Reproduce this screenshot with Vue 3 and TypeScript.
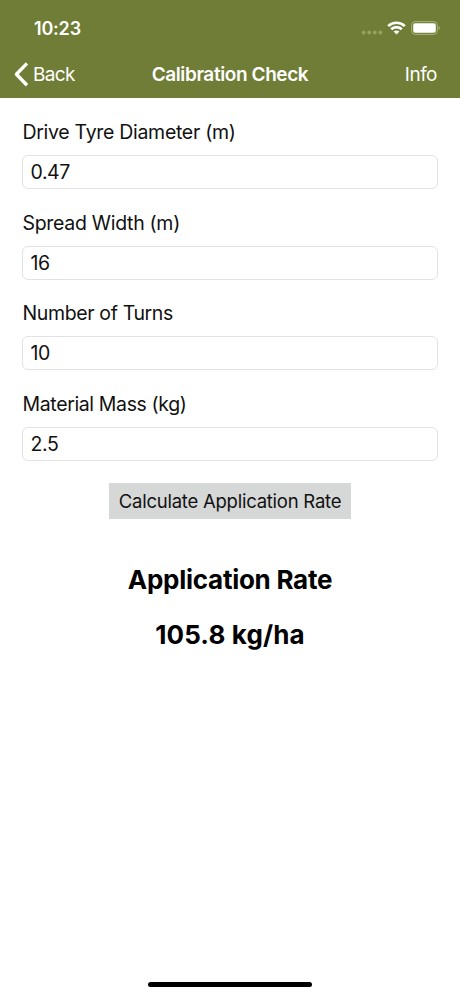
<script setup lang="ts">
import { computed, ref } from 'vue'

interface Field {
  id: string
  label: string
  value: string
}

const fields = ref<Field[]>([
  { id: 'diameter', label: 'Drive Tyre Diameter (m)', value: '0.47' },
  { id: 'width', label: 'Spread Width (m)', value: '16' },
  { id: 'turns', label: 'Number of Turns', value: '10' },
  { id: 'mass', label: 'Material Mass (kg)', value: '2.5' },
])

function calculate(): number {
  const [diameter, width, turns, mass] = fields.value.map((f) => Number(f.value))
  // mass over covered area, converted from kg/m² to kg/ha
  return (mass / (Math.PI * diameter * turns * width)) * 10000
}

const rate = ref(calculate())
const rateText = computed(() => `${rate.value.toFixed(1)} kg/ha`)
</script>

<template>
  <div class="screen">
    <header class="header">
      <div class="status">
        <span class="time">10:23</span>
        <div class="indicators">
          <svg class="dots" width="22" height="5" viewBox="0 0 22 5" fill="#97a35a">
            <circle cx="2.6" cy="2.5" r="1.9" />
            <circle cx="8.2" cy="2.5" r="1.9" />
            <circle cx="13.8" cy="2.5" r="1.9" />
            <circle cx="19.4" cy="2.5" r="1.9" />
          </svg>
          <svg class="wifi" width="19" height="14" viewBox="0 0 19 14" fill="none" stroke="#fff" stroke-width="2.7">
            <path d="M1.2 5.1 C5.8 .6 13.2 .6 17.8 5.1" />
            <path d="M4.2 8.3 C7.1 5.4 11.9 5.4 14.8 8.3" />
            <path d="M9.5 13.5 L6.6 10.6 C8.2 9.2 10.8 9.2 12.4 10.6 Z" fill="#fff" stroke="none" />
          </svg>
          <svg class="battery" width="30" height="14" viewBox="0 0 30 14">
            <rect x=".6" y=".6" width="25.8" height="12.8" rx="3.6" fill="none" stroke="#a9b477" stroke-width="1" />
            <rect x="2.2" y="2.2" width="22.6" height="9.6" rx="2" fill="#fff" />
            <path d="M27.6 4.8 C29.3 5.5 29.3 8.5 27.6 9.2 Z" fill="#a9b477" />
          </svg>
        </div>
      </div>
      <nav class="nav">
        <a class="back">
          <svg width="15" height="25" viewBox="0 0 15 25" fill="none" stroke="#fff" stroke-width="3.4" stroke-linejoin="round">
            <path d="M13 1.4 L2.4 12.3 L13 23.2" />
          </svg>
          <span class="back-text">Back</span>
        </a>
        <h1 class="title">Calibration Check</h1>
        <a class="info">Info</a>
      </nav>
    </header>

    <main class="content">
      <div v-for="field in fields" :key="field.id" class="field">
        <label :class="['label', field.id]" :for="field.id">{{ field.label }}</label>
        <input :id="field.id" v-model="field.value" class="input" type="text" inputmode="decimal" />
      </div>
      <button class="calculate" type="button" @click="rate = calculate()">Calculate Application Rate</button>
      <h2 class="result heading">Application Rate</h2>
      <p class="result amount">{{ rateText }}</p>
    </main>

    <div class="home-indicator"></div>
  </div>
</template>

<style>
body {
  margin: 0;
  background: #fff;
}
</style>

<style scoped>
.screen {
  box-sizing: border-box;
  display: flex;
  flex-direction: column;
  align-items: center;
  width: 460px;
  height: 996px;
  padding-bottom: 9px;
  background: #fff;
  color: #111;
  font-family: Inter, "Liberation Sans", sans-serif;
  font-size: 19.5px;
}

.header {
  width: 100%;
  height: 98px;
  background: #707d36;
  color: #fff;
}

.status {
  display: flex;
  justify-content: space-between;
  height: 50px;
  padding: 0 19px 0 34px;
}

.time {
  padding-top: 18px;
  font-size: 18px;
  font-weight: 600;
  letter-spacing: -0.2px;
  line-height: 22px;
}

.indicators {
  display: flex;
  align-items: flex-start;
  padding-top: 21px;
}

.dots {
  margin: 9px 4px 0 0;
}

.wifi {
  margin-right: 5px;
}

.nav {
  display: grid;
  grid-template-columns: 1fr auto 1fr;
  align-items: center;
  height: 48px;
  padding: 0 23px 0 14px;
  line-height: 24px;
}

.back {
  display: flex;
  align-items: center;
  gap: 4px;
}

.back-text {
  padding-top: 1px;
  font-size: 19px;
  letter-spacing: -0.65px;
}

.title {
  margin: 0 0 0 9px;
  padding-top: 1px;
  font-size: 19px;
  font-weight: 600;
  letter-spacing: -0.4px;
}

.info {
  justify-self: end;
  padding-top: 1px;
  font-size: 19px;
  letter-spacing: -0.5px;
}

.content {
  box-sizing: border-box;
  display: flex;
  flex: 1;
  flex-direction: column;
  align-items: center;
  width: 100%;
  padding: 22px 22px 0;
}

.field {
  display: flex;
  flex-direction: column;
  gap: 11px;
  width: 100%;
  height: 90.6px;
}

.label {
  height: 24px;
  padding-left: 0.5px;
  letter-spacing: -0.3px;
  line-height: 24px;
}

.label.turns,
.label.mass {
  letter-spacing: -0.37px;
}

.input {
  box-sizing: border-box;
  width: 100%;
  height: 34px;
  padding: 0 7.5px;
  border: 1px solid #e2e2e2;
  border-radius: 6px;
  outline: none;
  background: #fff;
  color: #111;
  font: inherit;
  letter-spacing: -0.4px;
}

.calculate {
  width: 242px;
  height: 36px;
  margin-top: 0.6px;
  padding: 0;
  border: 0;
  border-radius: 0;
  background: #d6d7d7;
  color: #111;
  font: inherit;
  font-size: 18.5px;
  letter-spacing: -0.24px;
  white-space: nowrap;
}

.result {
  margin: 0;
  color: #000;
  font-size: 26px;
  font-weight: 700;
  line-height: 32px;
}

.heading {
  margin-top: 45.5px;
  letter-spacing: -0.27px;
}

.amount {
  margin-top: 22.5px;
  letter-spacing: 0.15px;
}

.home-indicator {
  width: 164px;
  height: 5.5px;
  border-radius: 3px;
  background: #000;
}
</style>
